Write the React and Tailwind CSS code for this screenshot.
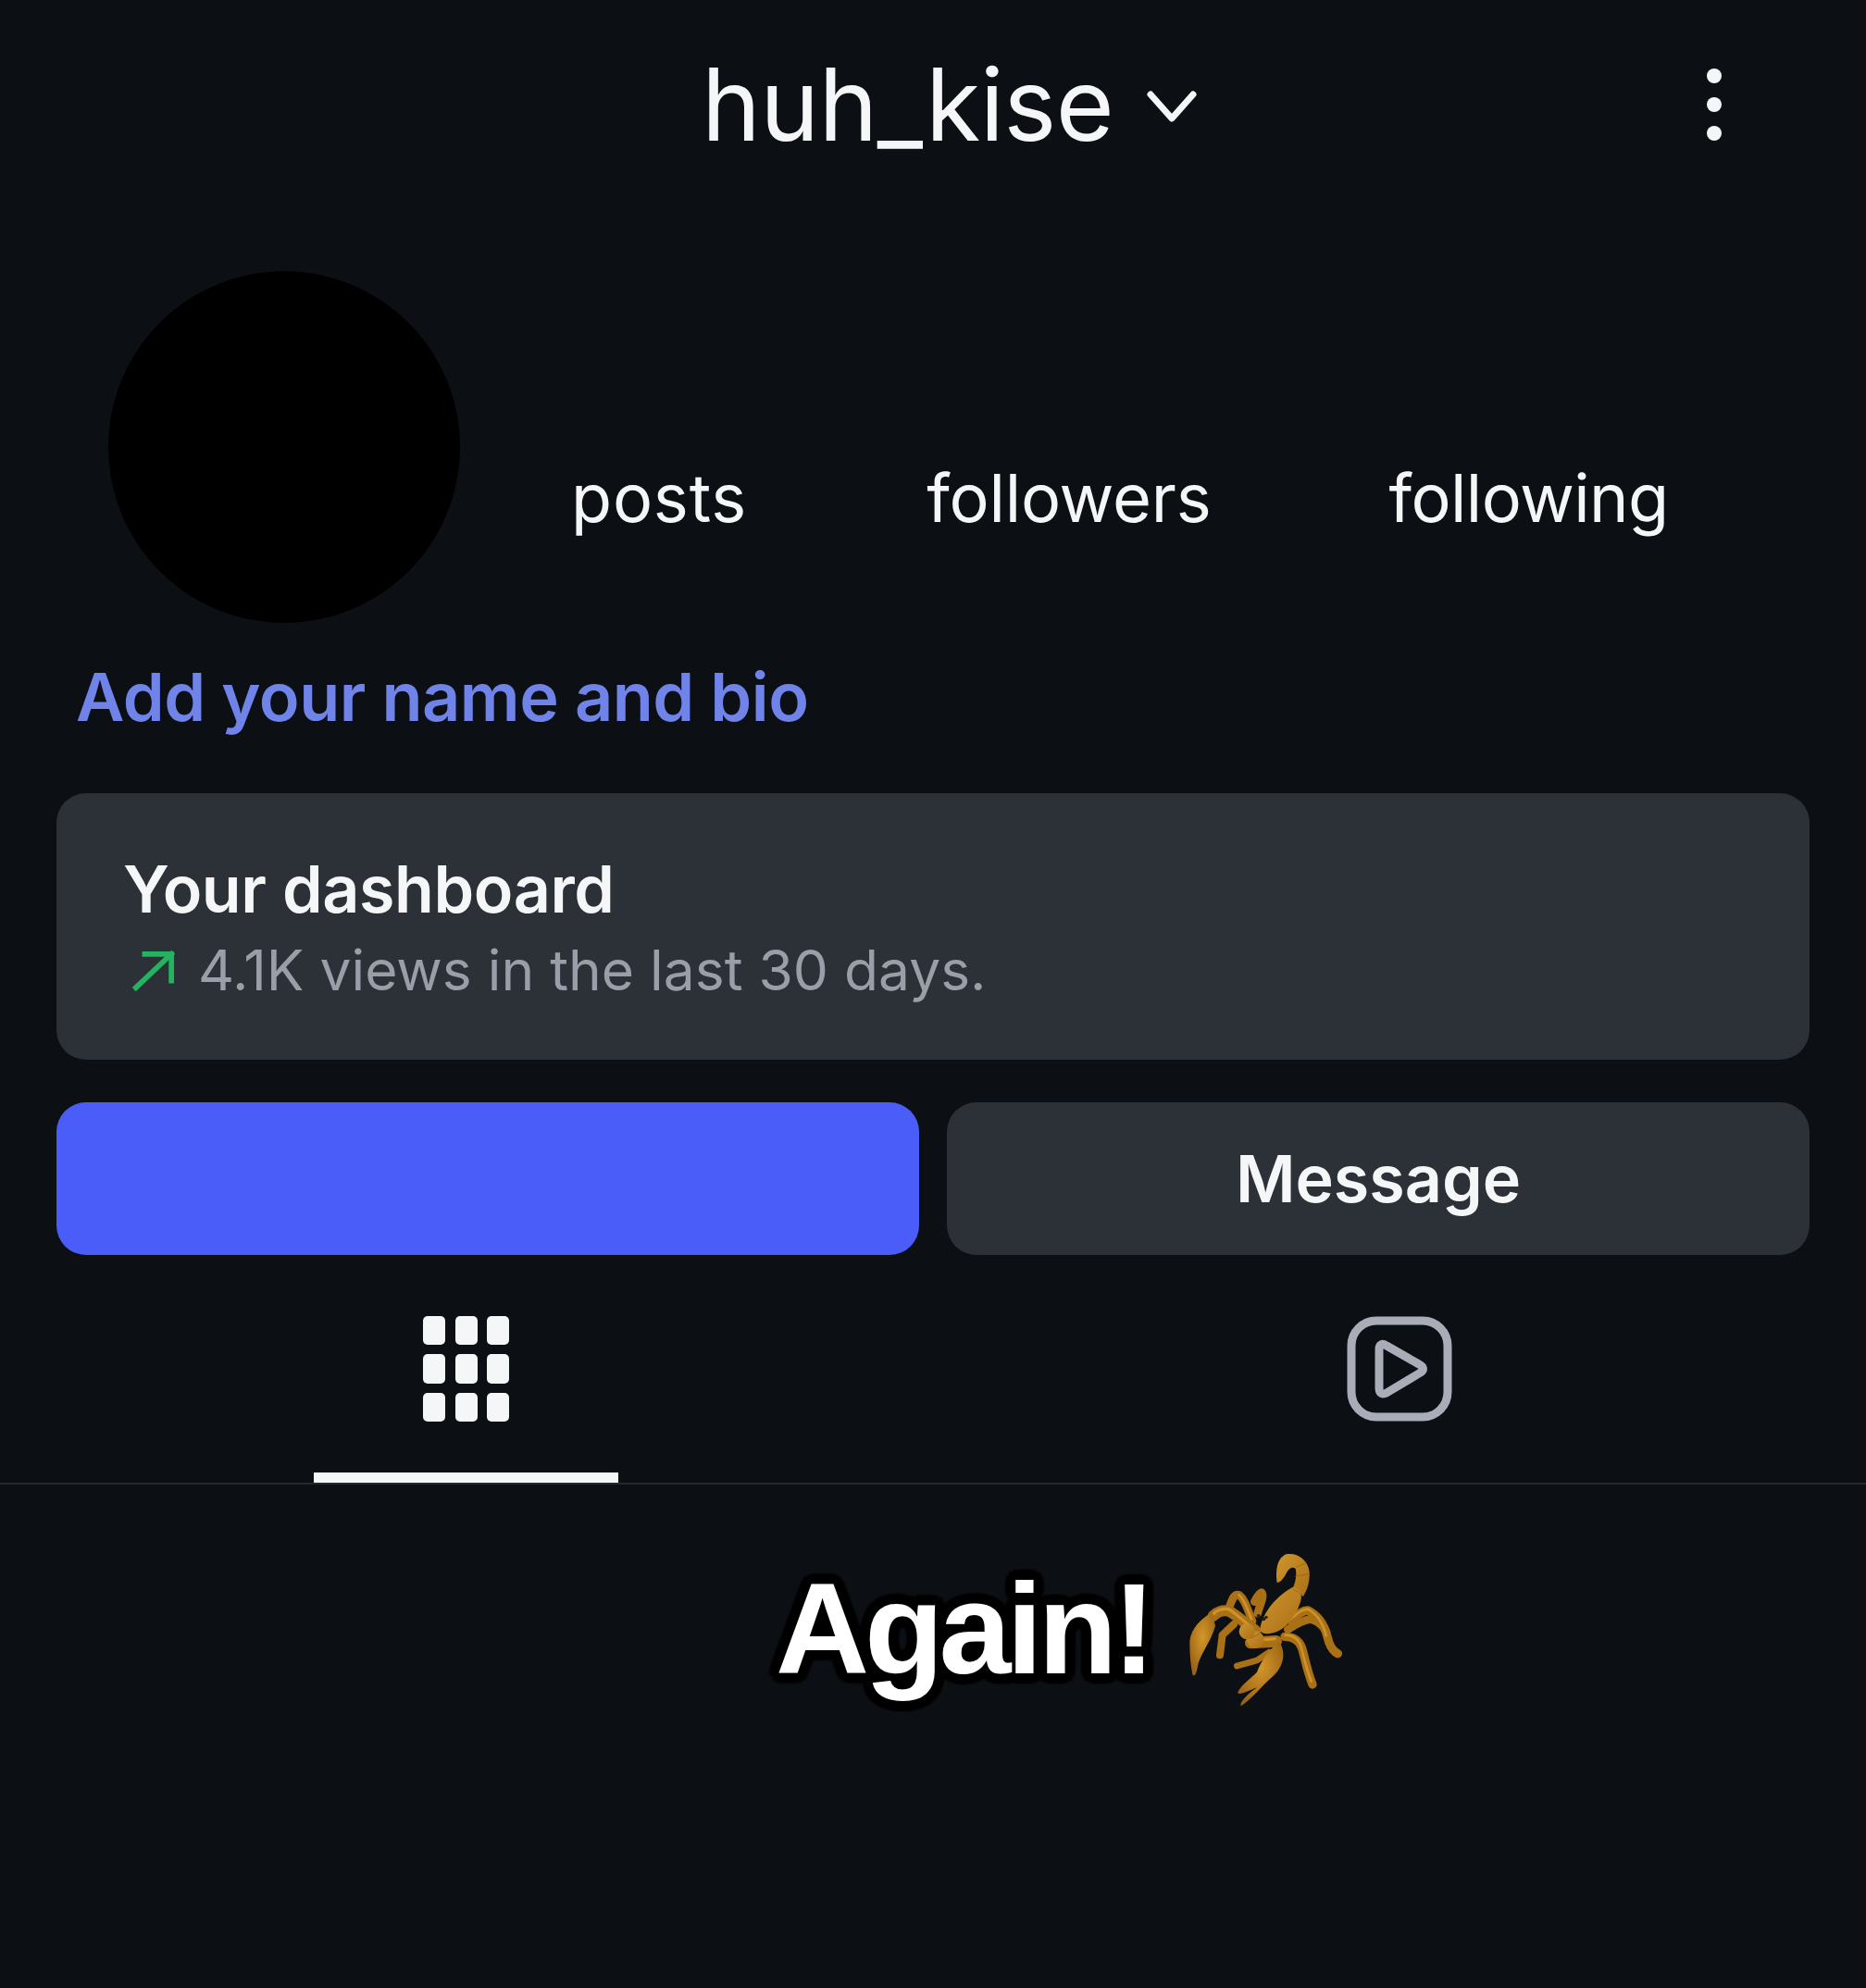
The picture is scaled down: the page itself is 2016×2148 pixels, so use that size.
export default function App() {
  return (
    <div className="min-h-[2148px] w-full bg-[#0c1014] font-['Inter','Liberation_Sans',sans-serif] text-[#f5f6f7] overflow-hidden">
      <header className="h-[226px] flex items-center pl-[758px] pr-[156px]">
        <span className="text-[108px] leading-none tracking-[-0.6px]">huh_kise</span>
        <svg className="ml-[36px] mt-[4px]" width="54" height="36" viewBox="0 0 54 36" fill="none" stroke="#f5f6f7" strokeWidth="7" strokeLinecap="round" strokeLinejoin="round"><path d="M4 5 L27 31 L50 5" /></svg>
        <svg className="ml-auto" width="16" height="78" viewBox="0 0 16 78" fill="#f5f6f7"><circle cx="8" cy="8" r="8" /><circle cx="8" cy="39" r="8" /><circle cx="8" cy="70" r="8" /></svg>
      </header>
      <section className="flex mt-[67px] pl-[117px] h-[380px]">
        <div className="w-[380px] h-[380px] rounded-full bg-black shrink-0" />
        <div className="flex text-[72px] leading-none pl-[120px] pt-[209px]">
          <span className="tracking-[0.8px]">posts</span>
          <span className="ml-[194px] tracking-[-0.2px]">followers</span>
          <span className="ml-[192px] tracking-[-0.6px]">following</span>
        </div>
      </section>
      <p className="mt-[42px] ml-[82px] text-[72px] leading-[76px] font-semibold text-[#6f83e8] tracking-[-0.5px]">Add your name and bio</p>
      <div className="mx-[61px] mt-[66px] h-[288px] rounded-[32px] bg-[#2c3037] pl-[72px] pt-[66px]">
        <p className="text-[70px] leading-[76px] font-semibold tracking-[-0.4px]">Your dashboard</p>
        <div className="flex items-center mt-[13px]">
          <svg className="ml-[10px]" width="46" height="46" viewBox="0 0 48 48" fill="none" stroke="#22b45e" strokeWidth="6" strokeLinecap="square"><path d="M4 44 L44 6 M14 6 H44 V36" /></svg>
          <span className="ml-[25px] text-[60.5px] leading-[72px] text-[#9a9ea8]">4.1K views in the last 30 days.</span>
        </div>
      </div>
      <div className="grid grid-cols-2 gap-[30px] mx-[61px] mt-[46px] h-[165px]">
        <div className="rounded-[32px] bg-[#4a5df9]" />
        <div className="rounded-[32px] bg-[#2c3037] flex items-center justify-center text-[70px] font-semibold">Message</div>
      </div>
      <nav className="grid grid-cols-2 h-[248px] border-b-2 border-[#25292e]">
        <div className="relative flex justify-center pt-[66px]">
          <svg width="94" height="114" viewBox="0 0 94 114" fill="#f5f6f7">
            <rect x="0" y="0" width="24" height="31" rx="5" /><rect x="35" y="0" width="24" height="31" rx="5" /><rect x="69" y="0" width="24" height="31" rx="5" />
            <rect x="0" y="41" width="24" height="32" rx="5" /><rect x="35" y="41" width="24" height="32" rx="5" /><rect x="69" y="41" width="24" height="32" rx="5" />
            <rect x="0" y="83" width="24" height="31" rx="5" /><rect x="35" y="83" width="24" height="31" rx="5" /><rect x="69" y="83" width="24" height="31" rx="5" />
          </svg>
          <div className="absolute bottom-0 left-[339px] w-[329px] h-[11px] bg-[#f5f6f7]" />
        </div>
        <div className="flex justify-center pt-[66px]">
          <svg width="114" height="114" viewBox="0 0 114 114" fill="none" stroke="#a8adb8" strokeWidth="9" strokeLinejoin="round">
            <rect x="5" y="5" width="104" height="104" rx="27" />
            <path d="M35 36 C35 30 39 29 43 32 L78 52 C84 55 84 59 78 62 L43 83 C39 85 35 84 35 78 Z" />
          </svg>
        </div>
      </nav>
      <div className="flex items-start pl-[838px] mt-[74px]">
        <span className="font-['Liberation_Sans',sans-serif] font-bold text-[140px] leading-[164px] tracking-[-5px] text-white [text-shadow:11px_0_2px_#000,-11px_0_2px_#000,0_11px_2px_#000,0_-11px_2px_#000,8px_8px_2px_#000,-8px_8px_2px_#000,8px_-8px_2px_#000,-8px_-8px_2px_#000,10px_4px_2px_#000,-10px_4px_2px_#000,10px_-4px_2px_#000,-10px_-4px_2px_#000,4px_10px_2px_#000,-4px_10px_2px_#000,4px_-10px_2px_#000,-4px_-10px_2px_#000]">Again!</span>
        <svg className="ml-[24px] -mt-[18px]" width="190" height="190" viewBox="0 0 570 570">
          <defs>
            <linearGradient id="sc" x1="0" y1="0" x2="1" y2="1">
              <stop offset="0" stopColor="#cf952c" />
              <stop offset="1" stopColor="#a96f18" />
            </linearGradient>
            <radialGradient id="bulb" cx="0.5" cy="0.4" r="0.6">
              <stop offset="0" stopColor="#d3962b" />
              <stop offset="1" stopColor="#9c6414" />
            </radialGradient>
            <filter id="soft"><feGaussianBlur stdDeviation="1.8" /></filter>
          </defs>
          <g filter="url(#soft)">
            <g fill="none" stroke="#a96f18" strokeLinecap="round" strokeLinejoin="round">
              <path strokeWidth="26" d="M255 275 C240 240 232 205 212 190 C195 185 190 205 182 225" />
              <path strokeWidth="26" d="M272 250 C280 220 295 195 285 182 C275 185 268 200 262 212" />
              <path strokeWidth="24" d="M195 285 L158 320 L150 385" />
              <path strokeWidth="28" d="M380 272 C400 255 415 240 435 240 C465 255 488 285 498 325 C505 355 515 372 532 380" />
              <path strokeWidth="26" d="M370 302 C395 285 425 270 445 268 C465 275 485 290 495 310" />
              <path strokeWidth="28" d="M360 325 C385 325 405 335 415 360 C425 390 430 430 450 480" />
              <path strokeWidth="20" d="M310 375 L270 402 L205 420" />
              <path strokeWidth="36" d="M265 305 C235 285 205 255 178 242 C160 238 140 245 128 258" />
              <path strokeWidth="38" d="M250 345 L332 340" />
            </g>
            <g fill="none" stroke="#d49a30" strokeLinecap="round" strokeLinejoin="round" opacity="0.85">
              <path strokeWidth="8" d="M252 268 C238 235 230 205 212 190" />
              <path strokeWidth="8" d="M380 268 C400 250 415 236 435 236 C462 250 484 282 494 322" />
              <path strokeWidth="8" d="M362 320 C385 320 405 332 413 358 C422 390 428 425 446 470" />
              <path strokeWidth="10" d="M255 298 C232 280 205 252 178 236 C160 232 140 240 130 250" />
              <path strokeWidth="10" d="M255 338 L328 332" />
            </g>
            <g fill="url(#sc)">
              <path d="M335 150 C330 110 335 70 365 58 C400 52 435 75 440 115 C442 150 432 175 420 195 L385 170 C395 150 400 125 395 105 C385 95 372 105 365 120 C358 135 345 150 335 150Z" />
              <path d="M280 300 C290 240 340 190 385 165 C410 165 420 190 410 215 C395 260 360 310 310 315 C290 318 280 310 280 300Z" />
              <circle cx="265" cy="335" r="28" />
              <circle cx="238" cy="308" r="26" />
            </g>
            <path fill="url(#bulb)" d="M125 245 C90 265 55 300 52 340 C52 380 55 420 62 450 C70 455 75 440 80 410 C95 370 125 330 135 290Z" />
            <path fill="url(#bulb)" d="M340 340 C365 370 360 420 320 455 C290 480 250 530 218 550 C212 540 240 510 270 490 C245 500 215 515 208 508 C210 490 250 460 270 440 C285 400 310 370 340 340Z" />
            <g fill="none" stroke="#8a5810" strokeWidth="3" opacity="0.6">
              <path d="M385 170 C398 178 410 182 420 195" />
              <path d="M392 130 L438 122" />
              <path d="M396 100 L430 86" />
              <path d="M250 330 L285 312" />
            </g>
            <g fill="#2e1d05"><circle cx="275" cy="258" r="6" /><circle cx="292" cy="268" r="6" /><circle cx="300" cy="262" r="5" /></g>
          </g>
        </svg>
      </div>
    </div>
  );
}
